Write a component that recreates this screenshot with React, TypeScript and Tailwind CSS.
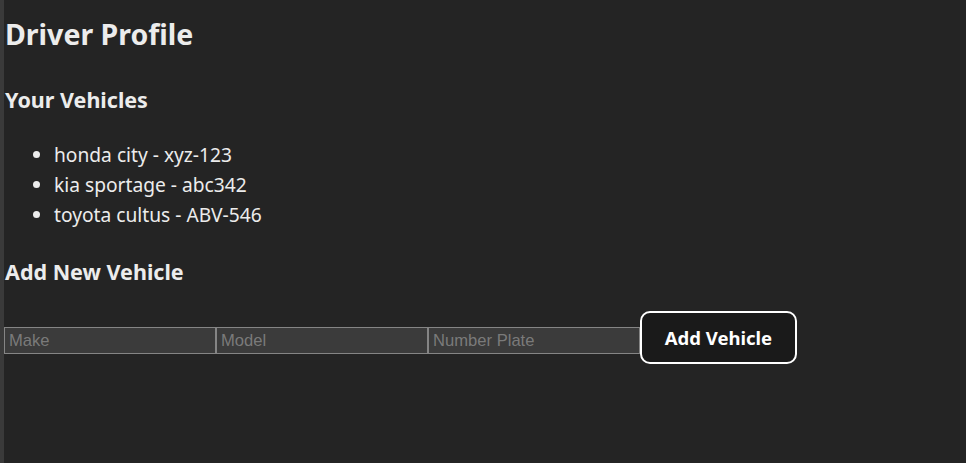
import React, { useState } from 'react';

const VEHICLES = [
  { name: 'honda city', plate: 'xyz-123' },
  { name: 'kia sportage', plate: 'abc342' },
  { name: 'toyota cultus', plate: 'ABV-546' },
];

export default function App() {
  const [make, setMake] = useState('');
  const [model, setModel] = useState('');
  const [plate, setPlate] = useState('');

  return (
    <div className="flex min-h-screen bg-[#242424] text-[#ececec]" style={{ fontFamily: '"Noto Sans", sans-serif' }}>
      {/* scroll-like strip on the left edge */}
      <div className="w-[4px] shrink-0 bg-[#3a3a3a]" />

      <div className="flex flex-col">
        <h1 className="mt-[14px] ml-[1px] text-[28.5px] font-bold leading-[40px]">Driver Profile</h1>

        <h3 className="mt-[32px] ml-[1px] text-[21.5px] font-bold leading-[28px]">Your Vehicles</h3>
        <ul className="mt-[26px] ml-[32px] list-disc pl-[18px] text-[19.2px] leading-[30px]">
          {VEHICLES.map((v) => (
            <li key={v.plate}>
              {v.name} - {v.plate}
            </li>
          ))}
        </ul>

        <h3 className="mt-[28px] ml-[1px] text-[21.5px] font-bold leading-[28px]">Add New Vehicle</h3>

        <div className="mt-[31px] flex items-center">
          <input
            value={make}
            onChange={(e) => setMake(e.target.value)}
            placeholder="Make"
            className="h-[27px] w-[212px] border border-[#858585] bg-[#3b3b3b] px-[4px] text-[16.6px] text-white placeholder:text-[#7a7a7a]"
            style={{ fontFamily: '"Liberation Sans", Arial, sans-serif' }}
          />
          <input
            value={model}
            onChange={(e) => setModel(e.target.value)}
            placeholder="Model"
            className="h-[27px] w-[212px] border border-[#858585] bg-[#3b3b3b] px-[4px] text-[16.6px] text-white placeholder:text-[#7a7a7a]"
            style={{ fontFamily: '"Liberation Sans", Arial, sans-serif' }}
          />
          <input
            value={plate}
            onChange={(e) => setPlate(e.target.value)}
            placeholder="Number Plate"
            className="h-[27px] w-[212px] border border-[#858585] bg-[#3b3b3b] px-[4px] text-[16.6px] text-white placeholder:text-[#7a7a7a]"
            style={{ fontFamily: '"Liberation Sans", Arial, sans-serif' }}
          />
          <button className="h-[53px] w-[157px] -mt-[6px] rounded-[10px] border-2 border-white bg-[#1a1a1a] text-[18.5px] font-bold text-white">
            Add Vehicle
          </button>
        </div>
      </div>
    </div>
  );
}
